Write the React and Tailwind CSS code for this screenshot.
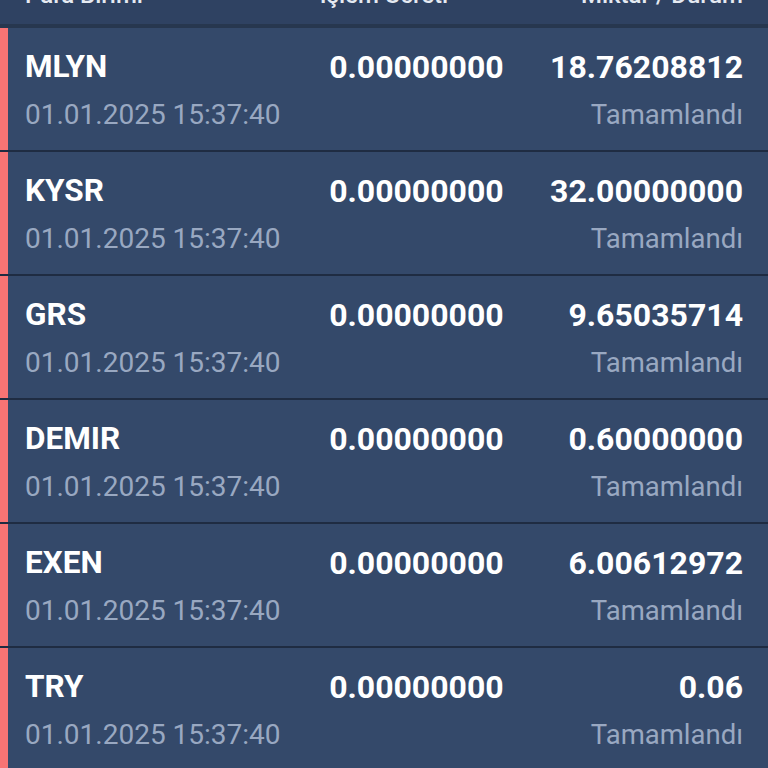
import React from 'react';

const rows = [
  { code: 'MLYN', fee: '0.00000000', amount: '18.76208812' },
  { code: 'KYSR', fee: '0.00000000', amount: '32.00000000' },
  { code: 'GRS', fee: '0.00000000', amount: '9.65035714' },
  { code: 'DEMIR', fee: '0.00000000', amount: '0.60000000' },
  { code: 'EXEN', fee: '0.00000000', amount: '6.00612972' },
  { code: 'TRY', fee: '0.00000000', amount: '0.06' }
];

const date = '01.01.2025 15:37:40';

export default function App() {
  return (
    <div
      className="h-[768px] w-[768px] overflow-hidden bg-[#34496a]"
      style={{ fontFamily: 'Roboto, "Liberation Sans", sans-serif' }}
    >
      <div className="h-[24px] overflow-hidden bg-[#2f4262]">
        <div className="-mt-[19px] flex px-[25px] text-[24px] font-medium leading-[28px] text-[#e5eaf2]">
          <div className="min-w-0 flex-1">Para Birimi</div>
          <div className="min-w-0 flex-1 text-center">İşlem Ücreti</div>
          <div className="min-w-0 flex-1 text-right">Miktar / Durum</div>
        </div>
      </div>
      <div className="h-[4px] bg-[#27374f]" />

      {rows.map((row) => (
        <div key={row.code} className="flex border-b-2 border-[#1f2c42]">
          <div className="w-[8px] shrink-0 bg-[#f87474]" />
          <div className="flex flex-1 whitespace-nowrap pb-[17px] pl-[17px] pr-[25px] pt-[21px]">
            <div className="min-w-0 flex-1">
              <div className="text-[31.5px] font-bold leading-[36px] text-white">{row.code}</div>
              <div className="mt-[12px] text-[28px] leading-[36px] text-[#99a8c1]">{date}</div>
            </div>
            <div className="min-w-0 flex-1 text-right">
              <div className="text-[32px] font-bold leading-[36px] text-white">{row.fee}</div>
            </div>
            <div className="min-w-0 flex-1 text-right">
              <div className="text-[32px] font-bold leading-[36px] text-white">{row.amount}</div>
              <div className="mt-[12px] text-[27.5px] leading-[36px] text-[#99a8c1]">Tamamlandı</div>
            </div>
          </div>
        </div>
      ))}
    </div>
  );
}
